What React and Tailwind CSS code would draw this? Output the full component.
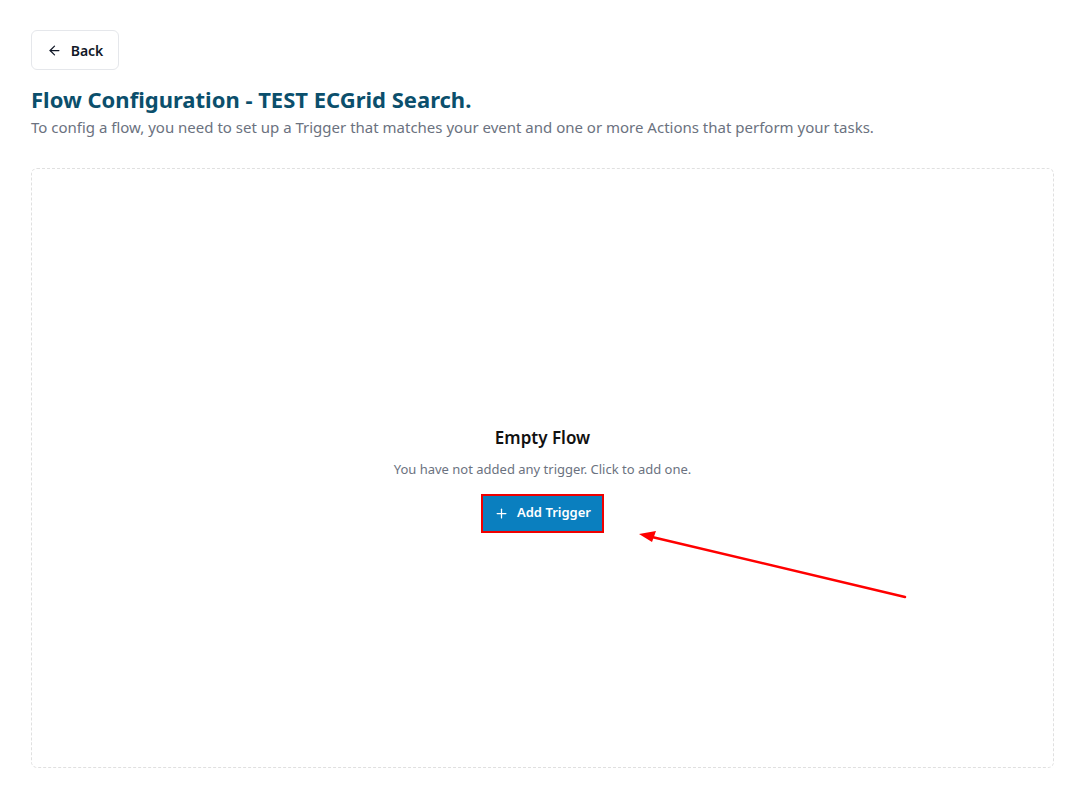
import { ArrowLeft, Plus } from "lucide-react";

const font = { fontFamily: '"Noto Sans", "Open Sans", sans-serif' };

export default function App() {
  return (
    <div className="relative min-h-[797px] bg-white px-[31px] pt-[30px] pb-[29px]" style={font}>
      <button className="flex h-[40px] w-[88px] items-center justify-center gap-[9px] rounded-[6px] border border-[#e5e7eb] bg-white text-[14px] font-semibold text-[#111827]">
        <ArrowLeft size={15} strokeWidth={2} />
        Back
      </button>

      <h1 className="mt-[14px] text-[22px] font-bold leading-[30px] text-[#0b4f6c]">
        Flow Configuration - TEST ECGrid Search.
      </h1>
      <p className="mt-[3px] text-[15px] leading-[20px] text-[#6b7280]">
        To config a flow, you need to set up a Trigger that matches your event and one or more Actions that perform your tasks.
      </p>

      <div className="mt-[31px] flex h-[600px] flex-col items-center justify-center rounded-[6px] border border-dashed border-[#e0e0e0] pt-[22px]">
        <h2 className="text-[17px] font-semibold leading-[24px] text-[#111]">Empty Flow</h2>
        <p className="mt-[10px] text-[13px] leading-[18px] text-[#6b7280]">
          You have not added any trigger. Click to add one.
        </p>
        <button className="mt-[16px] flex h-[39px] w-[123px] items-center justify-center gap-[8px] border-2 border-[#f00000] bg-[#0a7fbf] text-[13px] font-semibold text-white">
          <Plus size={15} strokeWidth={2} />
          Add Trigger
        </button>
      </div>

      <svg className="pointer-events-none absolute left-0 top-0" width="1085" height="797">
        <line x1="905" y1="597" x2="652" y2="537" stroke="#f00" strokeWidth="2.5" strokeLinecap="round" />
        <polygon points="639,534 656,531 652,542" fill="#f00" />
      </svg>
    </div>
  );
}
